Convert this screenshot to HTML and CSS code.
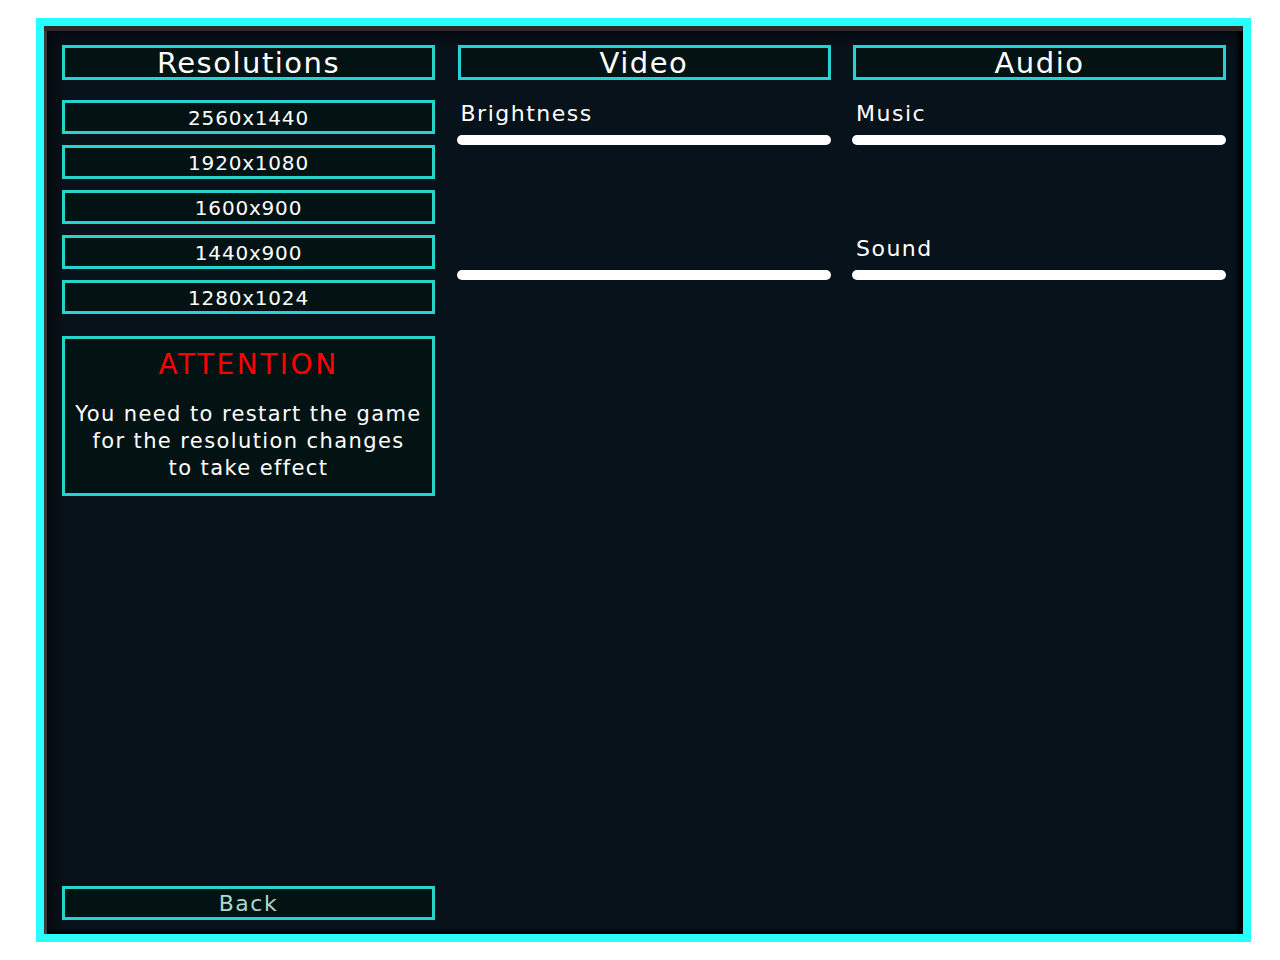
FILE: index.html
```html
<!DOCTYPE html>
<html lang="en">
<head>
<meta charset="utf-8">
<title>Settings</title>
<link rel="stylesheet" href="styles.css">
</head>
<body>
<div class="frame">
  <div class="panel">
    <section class="col col-res">
      <div class="box header">Resolutions</div>
      <div class="res-list">
        <div class="box res">2560x1440</div>
        <div class="box res">1920x1080</div>
        <div class="box res">1600x900</div>
        <div class="box res">1440x900</div>
        <div class="box res">1280x1024</div>
      </div>
      <div class="box notice">
        <div class="notice-title">ATTENTION</div>
        <div class="notice-text">You need to restart the game<br>for the resolution changes<br>to take effect</div>
      </div>
      <div class="box back">Back</div>
    </section>
    <section class="col">
      <div class="box header">Video</div>
      <div class="group first">
        <div class="label">Brightness</div>
        <div class="slider"></div>
      </div>
      <div class="group">
        <div class="label"></div>
        <div class="slider"></div>
      </div>
    </section>
    <section class="col">
      <div class="box header">Audio</div>
      <div class="group first">
        <div class="label">Music</div>
        <div class="slider"></div>
      </div>
      <div class="group">
        <div class="label">Sound</div>
        <div class="slider"></div>
      </div>
    </section>
  </div>
</div>
</body>
</html>
```
FILE: styles.css
```css
html, body {
  margin: 0;
  padding: 0;
  background: #ffffff;
}
body {
  font-family: "DejaVu Sans", "Noto Sans", sans-serif;
  color: #ffffff;
}
.frame {
  box-sizing: border-box;
  margin: 18px 0 0 36px;
  width: 1215px;
  height: 924px;
  border: 8px solid #2affff;
}
.panel {
  box-sizing: border-box;
  height: 100%;
  background: #08121a;
  padding: 19px 17px 14px 18px;
  display: grid;
  grid-template-columns: 373px 373px 373px;
  column-gap: 22.5px;
  box-shadow:
    inset 0 5px 0 #2c2c2c,
    inset 3px 0 0 #3a3a3a,
    inset -5px 0 4px #000000,
    inset 0 -3px 3px #000000,
    inset 10px 10px 14px rgba(0,0,0,0.55);
}
.col {
  display: flex;
  flex-direction: column;
  min-height: 0;
}
.box {
  box-sizing: border-box;
  border: 3px solid #27d3cd;
  background: #031314;
  text-align: center;
}
.header {
  height: 35px;
  font-size: 29px;
  line-height: 31px;
  letter-spacing: 1.5px;
}
.res-list {
  margin-top: 20px;
  display: flex;
  flex-direction: column;
  gap: 11px;
}
.res {
  height: 34px;
  font-size: 20px;
  line-height: 30px;
  letter-spacing: 0.8px;
}
.notice {
  margin-top: 22px;
  height: 160px;
  padding-top: 9px;
}
.notice-title {
  color: #ff0000;
  font-size: 28px;
  line-height: 34px;
  letter-spacing: 2.5px;
}
.notice-text {
  margin-top: 19px;
  font-size: 21px;
  line-height: 27px;
  letter-spacing: 1.4px;
}
.back {
  margin-top: auto;
  height: 34px;
  font-size: 22px;
  line-height: 29px;
  color: #a9d9cc;
  letter-spacing: 1.5px;
}
.group {
  margin-top: 87px;
  display: flex;
  flex-direction: column;
}
.group.first {
  margin-top: 17px;
}
.label {
  height: 34px;
  font-size: 22px;
  line-height: 34px;
  padding-left: 3px;
  letter-spacing: 1.5px;
}
.slider {
  margin-top: 4px;
  height: 10px;
  border-radius: 5px;
  background: #ffffff;
  margin-left: -1px;
}
```
